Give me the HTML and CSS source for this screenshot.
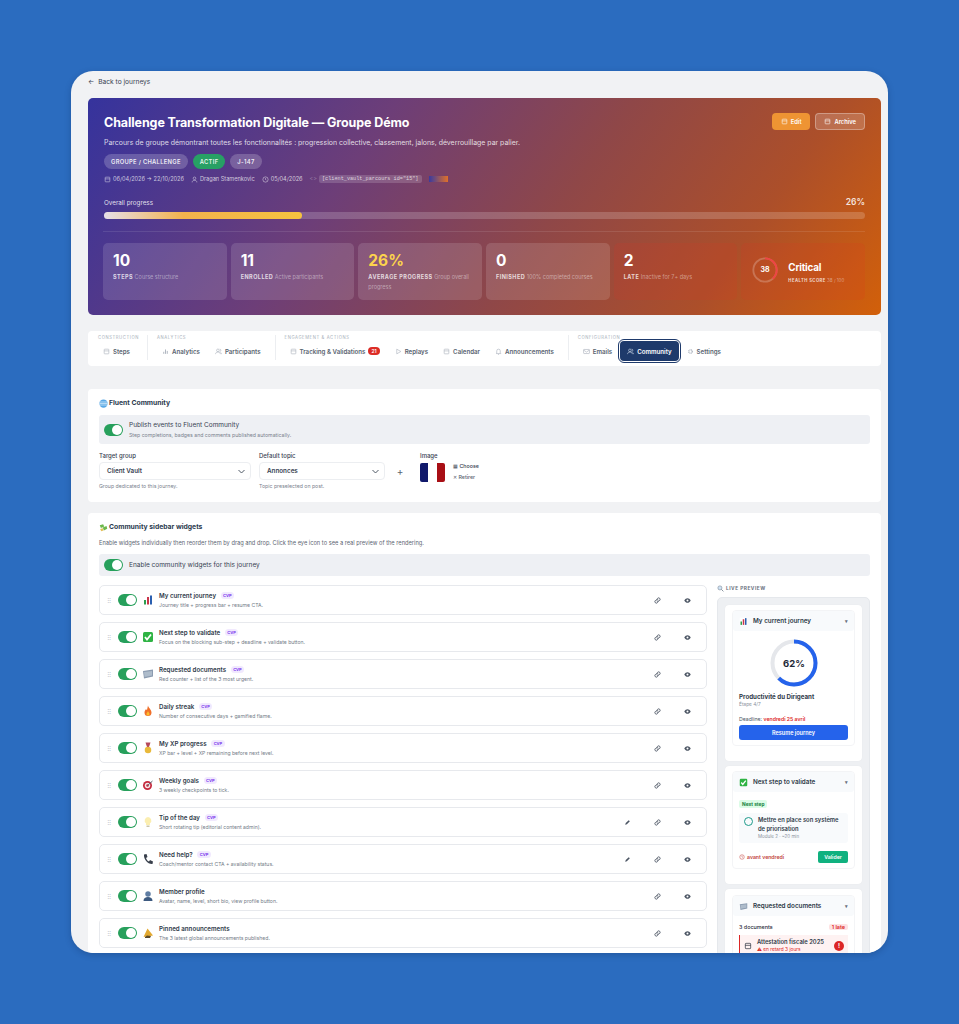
FILE: index.html
```html
<!DOCTYPE html>
<html lang="en">
<head>
<meta charset="utf-8">
<title>Challenge Transformation Digitale</title>
<link rel="stylesheet" href="styles.css">
</head>
<body>
<svg class="defs" width="0" height="0" aria-hidden="true">
  <symbol id="i-link" viewBox="0 0 24 24"><path d="M10 14a5 5 0 0 0 7 0l3-3a5 5 0 0 0-7-7l-1.500 1.500M14 10a5 5 0 0 0-7 0l-3 3a5 5 0 0 0 7 7l1.500-1.500" fill="none" stroke="currentColor" stroke-width="3" stroke-linecap="round"/></symbol>
  <symbol id="i-eye" viewBox="0 0 24 24"><path d="M1 12c3-5 7-8 11-8s8 3 11 8c-3 5-7 8-11 8s-8-3-11-8z" fill="currentColor"/><circle cx="12" cy="12" r="3.500" fill="#fff"/></symbol>
  <symbol id="i-pen" viewBox="0 0 24 24"><path d="M4 20l2-6L16 4l4 4-10 10z" fill="currentColor"/></symbol>
  <symbol id="i-chart" viewBox="0 0 24 24"><rect x="2" y="2" width="20" height="20" fill="#fff"/><rect x="4" y="12" width="4" height="9" fill="#2e9e4f"/><rect x="10" y="6" width="4" height="15" fill="#c9354a"/><rect x="16" y="3" width="4" height="18" fill="#2a5fb0"/></symbol>
  <symbol id="i-check" viewBox="0 0 24 24"><rect x="2" y="2" width="20" height="20" rx="3" fill="#2fb344"/><path d="M6 12l4 5 8-10" fill="none" stroke="#fff" stroke-width="3.500"/></symbol>
  <symbol id="i-doc" viewBox="0 0 24 24"><path d="M2 6l20-3v14L4 21z" fill="#8b9bb0"/><path d="M4 8l16-2v9L5 18z" fill="#aebccb"/></symbol>
  <symbol id="i-fire" viewBox="0 0 24 24"><path d="M12 1c1 5 7 8 7 14a7 7 0 0 1-14 0c0-3 2-5 3-7 1 2 2 2 2 2 1-3 1-6 2-9z" fill="#f0702a"/><path d="M12 12c1 3 3 4 3 6a3 3 0 0 1-6 0c0-2 2-3 3-6z" fill="#fbc02d"/></symbol>
  <symbol id="i-medal" viewBox="0 0 24 24"><path d="M7 1h10l-3 9h-4z" fill="#b5485a"/><circle cx="12" cy="16" r="6.500" fill="#e9b93a"/></symbol>
  <symbol id="i-target" viewBox="0 0 24 24"><circle cx="11" cy="13" r="9" fill="#c5283d"/><circle cx="11" cy="13" r="5.500" fill="#f2e6e6"/><circle cx="11" cy="13" r="2.500" fill="#c5283d"/><path d="M11 13L21 4" stroke="#5a6a7a" stroke-width="2"/></symbol>
  <symbol id="i-bulb" viewBox="0 0 24 24"><path d="M12 2a7 7 0 0 0-4 12.500V18h8v-3.500A7 7 0 0 0 12 2z" fill="#fbeeb0"/><rect x="9" y="19" width="6" height="3" fill="#c9c4a8"/></symbol>
  <symbol id="i-phone" viewBox="0 0 24 24"><path d="M4 3l5-1 2 6-3 2c1 3 3 6 6 7l2-3 6 3-1 5c-9 1-18-9-17-19z" fill="#39404c"/></symbol>
  <symbol id="i-user" viewBox="0 0 24 24"><circle cx="12" cy="8" r="5.500" fill="#5f7da3"/><path d="M3 22c0-6 4-8 9-8s9 2 9 8z" fill="#3d5a80"/></symbol>
  <symbol id="i-person" viewBox="0 0 24 24"><circle cx="12" cy="8" r="4.500" fill="none" stroke="currentColor" stroke-width="2"/><path d="M4 22c0-5 3-7 8-7s8 2 8 7" fill="none" stroke="currentColor" stroke-width="2"/></symbol>
  <symbol id="i-horn" viewBox="0 0 24 24"><path d="M3 20L11 3l11 14z" fill="#e3a92f"/><path d="M6 20l4-3 8 1-2 4H6z" fill="#5c4a2a"/></symbol>
  <symbol id="i-line" viewBox="0 0 24 24"><rect x="4" y="4" width="16" height="16" rx="2" fill="none" stroke="currentColor" stroke-width="2"/><path d="M4 10h16" stroke="currentColor" stroke-width="2"/></symbol>
  <symbol id="i-people" viewBox="0 0 24 24"><circle cx="10" cy="8" r="4.500" fill="none" stroke="currentColor" stroke-width="2"/><path d="M2 21c0-5 3-7 8-7s8 2 8 7M16 4a4 4 0 0 1 0 8M19 15c2 1 3 3 3 6" fill="none" stroke="currentColor" stroke-width="2"/></symbol>
  <symbol id="i-bell" viewBox="0 0 24 24"><path d="M6 17V10a6 6 0 0 1 12 0v7l2 2H4zM10 22h4" fill="none" stroke="currentColor" stroke-width="2"/></symbol>
  <symbol id="i-play" viewBox="0 0 24 24"><path d="M6 4l14 8-14 8z" fill="none" stroke="currentColor" stroke-width="2"/></symbol>
  <symbol id="i-mail" viewBox="0 0 24 24"><rect x="2" y="5" width="20" height="14" rx="2" fill="none" stroke="currentColor" stroke-width="2"/><path d="M2 7l10 7 10-7" fill="none" stroke="currentColor" stroke-width="2"/></symbol>
  <symbol id="i-gear" viewBox="0 0 24 24"><circle cx="12" cy="12" r="6" fill="none" stroke="currentColor" stroke-width="4" stroke-dasharray="3 1.500"/></symbol>
  <symbol id="i-bars" viewBox="0 0 24 24"><path d="M6 20v-7M12 20V5M18 20v-10" fill="none" stroke="currentColor" stroke-width="3"/></symbol>
  <symbol id="i-clock" viewBox="0 0 24 24"><circle cx="12" cy="12" r="9" fill="none" stroke="currentColor" stroke-width="2"/><path d="M12 7v5l3 2" fill="none" stroke="currentColor" stroke-width="2"/></symbol>
</svg>

<main class="window">
  <a class="back"><span>←</span>Back to journeys</a>

  <section class="hero">
    <div class="hero-top">
      <div>
        <h1>Challenge Transformation Digitale — Groupe Démo</h1>
        <p class="hero-desc">Parcours de groupe démontrant toutes les fonctionnalités : progression collective, classement, jalons, déverrouillage par palier.</p>
      </div>
      <div class="hero-actions">
        <button class="btn btn-edit"><svg class="ic7"><use href="#i-line"/></svg>Edit</button>
        <button class="btn btn-archive"><svg class="ic7"><use href="#i-line"/></svg>Archive</button>
      </div>
    </div>
    <div class="pills">
      <span class="pill pill-caps">GROUPE / CHALLENGE</span>
      <span class="pill pill-green">ACTIF</span>
      <span class="pill">J-147</span>
    </div>
    <div class="meta">
      <span class="meta-item"><svg class="ic7"><use href="#i-line"/></svg>06/04/2026 → 22/10/2026</span>
      <span class="meta-item"><svg class="ic7"><use href="#i-person"/></svg>Dragan Stamenkovic</span>
      <span class="meta-item"><svg class="ic7"><use href="#i-clock"/></svg>05/04/2026</span>
      <span class="meta-item meta-code"><span class="meta-arrows">&lt;&gt;</span><code>[client_vault_parcours id="15"]</code></span>
      <span class="swatch"></span>
    </div>
    <div class="progress-head"><span>Overall progress</span><strong>26%</strong></div>
    <div class="progress"><div class="progress-fill" style="width:26%"></div></div>
    <div class="stats">
      <div class="stat"><b>10</b><p><em>STEPS</em> Course structure</p></div>
      <div class="stat"><b>11</b><p><em>ENROLLED</em> Active participants</p></div>
      <div class="stat"><b class="gold">26%</b><p><em>AVERAGE PROGRESS</em> Group overall progress</p></div>
      <div class="stat"><b>0</b><p><em>FINISHED</em> 100% completed courses</p></div>
      <div class="stat stat-red"><b>2</b><p><em>LATE</em> Inactive for 7+ days</p></div>
      <div class="stat stat-red stat-health">
        <svg class="score" viewBox="0 0 30 30"><circle cx="15" cy="15" r="12.500" fill="none" stroke="rgba(255,255,255,.22)" stroke-width="2"/><circle cx="15" cy="15" r="12.500" fill="none" stroke="#ef4444" stroke-width="2" stroke-dasharray="30 79" transform="rotate(-90 15 15)"/><text x="15" y="17.500" text-anchor="middle">38</text></svg>
        <div class="health-text"><strong>Critical</strong><p><em class="tiny">HEALTH SCORE</em> 38 / 100</p></div>
      </div>
    </div>
  </section>

  <nav class="tabs">
    <div class="tab-group tab-group-first">
      <span class="tab-label">CONSTRUCTION</span>
      <div class="tab-row"><a class="tab"><svg class="ic7"><use href="#i-line"/></svg>Steps</a></div>
    </div>
    <div class="tab-group">
      <span class="tab-label">ANALYTICS</span>
      <div class="tab-row"><a class="tab"><svg class="ic7"><use href="#i-bars"/></svg>Analytics</a><a class="tab"><svg class="ic7"><use href="#i-people"/></svg>Participants</a></div>
    </div>
    <div class="tab-group">
      <span class="tab-label">ENGAGEMENT &amp; ACTIONS</span>
      <div class="tab-row"><a class="tab"><svg class="ic7"><use href="#i-line"/></svg>Tracking &amp; Validations <span class="count">21</span></a><a class="tab"><svg class="ic7"><use href="#i-play"/></svg>Replays</a><a class="tab"><svg class="ic7"><use href="#i-line"/></svg>Calendar</a><a class="tab"><svg class="ic7"><use href="#i-bell"/></svg>Announcements</a></div>
    </div>
    <div class="tab-group tab-group-last">
      <span class="tab-label">CONFIGURATION</span>
      <div class="tab-row"><a class="tab"><svg class="ic7"><use href="#i-mail"/></svg>Emails</a><a class="tab tab-active"><svg class="ic7"><use href="#i-people"/></svg>Community</a><a class="tab"><svg class="ic7"><use href="#i-gear"/></svg>Settings</a></div>
    </div>
  </nav>

  <section class="panel panel-fluent">
    <h2><svg class="globe" viewBox="0 0 24 24"><circle cx="12" cy="12" r="11" fill="#5aa9e6"/><path d="M2 8h20M1 12h22M2 16h20" stroke="#d8ecfa" stroke-width="2"/></svg>Fluent Community</h2>
    <div class="band band-tall">
      <span class="toggle"></span>
      <div><div class="band-title">Publish events to Fluent Community</div><div class="band-sub">Step completions, badges and comments published automatically.</div></div>
    </div>
    <div class="form-row">
      <div class="field field-group"><label>Target group</label><div class="select">Client Vault<svg class="chev" viewBox="0 0 12 12"><path d="M2 4l4 4 4-4" fill="none" stroke="currentColor" stroke-width="1.300"/></svg></div><small>Group dedicated to this journey.</small></div>
      <div class="field field-topic"><label>Default topic</label><div class="select">Annonces<svg class="chev" viewBox="0 0 12 12"><path d="M2 4l4 4 4-4" fill="none" stroke="currentColor" stroke-width="1.300"/></svg></div><small>Topic preselected on post.</small></div>
      <span class="plus">+</span>
      <div class="field field-image"><label>Image</label>
        <div class="image-row"><div class="flag"><i></i><i></i><i></i></div><div class="image-actions"><span class="img-choose">▦ Choose</span><span>✕ Retirer</span></div></div>
      </div>
    </div>
  </section>

  <section class="panel panel-widgets">
    <h2><svg class="globe" viewBox="0 0 24 24"><path d="M2 6l9-3 3 6-9 4zM10 12l10-4 2 7-9 5z" fill="#6cb84a"/><path d="M3 16l7-2 2 6-6 2z" fill="#e4c05a"/></svg>Community sidebar widgets</h2>
    <p class="lead">Enable widgets individually then reorder them by drag and drop. Click the eye icon to see a real preview of the rendering.</p>
    <div class="band band-short"><span class="toggle"></span><div class="band-title">Enable community widgets for this journey</div></div>
    <div class="split">
      <div class="rows">
        <div class="row"><span class="grip">⠿</span><span class="toggle"></span><svg class="emoji"><use href="#i-chart"/></svg><div class="row-text"><div class="row-title">My current journey <span class="tag">CVP</span></div><div class="row-sub">Journey title + progress bar + resume CTA.</div></div><svg class="act"><use href="#i-link"/></svg><svg class="act"><use href="#i-eye"/></svg></div>
        <div class="row"><span class="grip">⠿</span><span class="toggle"></span><svg class="emoji"><use href="#i-check"/></svg><div class="row-text"><div class="row-title">Next step to validate <span class="tag">CVP</span></div><div class="row-sub">Focus on the blocking sub-step + deadline + validate button.</div></div><svg class="act"><use href="#i-link"/></svg><svg class="act"><use href="#i-eye"/></svg></div>
        <div class="row"><span class="grip">⠿</span><span class="toggle"></span><svg class="emoji"><use href="#i-doc"/></svg><div class="row-text"><div class="row-title">Requested documents <span class="tag">CVP</span></div><div class="row-sub">Red counter + list of the 3 most urgent.</div></div><svg class="act"><use href="#i-link"/></svg><svg class="act"><use href="#i-eye"/></svg></div>
        <div class="row"><span class="grip">⠿</span><span class="toggle"></span><svg class="emoji"><use href="#i-fire"/></svg><div class="row-text"><div class="row-title">Daily streak <span class="tag">CVP</span></div><div class="row-sub">Number of consecutive days + gamified flame.</div></div><svg class="act"><use href="#i-link"/></svg><svg class="act"><use href="#i-eye"/></svg></div>
        <div class="row"><span class="grip">⠿</span><span class="toggle"></span><svg class="emoji"><use href="#i-medal"/></svg><div class="row-text"><div class="row-title">My XP progress <span class="tag">CVP</span></div><div class="row-sub">XP bar + level + XP remaining before next level.</div></div><svg class="act"><use href="#i-link"/></svg><svg class="act"><use href="#i-eye"/></svg></div>
        <div class="row"><span class="grip">⠿</span><span class="toggle"></span><svg class="emoji"><use href="#i-target"/></svg><div class="row-text"><div class="row-title">Weekly goals <span class="tag">CVP</span></div><div class="row-sub">3 weekly checkpoints to tick.</div></div><svg class="act"><use href="#i-link"/></svg><svg class="act"><use href="#i-eye"/></svg></div>
        <div class="row"><span class="grip">⠿</span><span class="toggle"></span><svg class="emoji"><use href="#i-bulb"/></svg><div class="row-text"><div class="row-title">Tip of the day <span class="tag">CVP</span></div><div class="row-sub">Short rotating tip (editorial content admin).</div></div><svg class="act"><use href="#i-pen"/></svg><svg class="act"><use href="#i-link"/></svg><svg class="act"><use href="#i-eye"/></svg></div>
        <div class="row"><span class="grip">⠿</span><span class="toggle"></span><svg class="emoji"><use href="#i-phone"/></svg><div class="row-text"><div class="row-title">Need help? <span class="tag">CVP</span></div><div class="row-sub">Coach/mentor contact CTA + availability status.</div></div><svg class="act"><use href="#i-pen"/></svg><svg class="act"><use href="#i-link"/></svg><svg class="act"><use href="#i-eye"/></svg></div>
        <div class="row"><span class="grip">⠿</span><span class="toggle"></span><svg class="emoji"><use href="#i-user"/></svg><div class="row-text"><div class="row-title">Member profile</div><div class="row-sub">Avatar, name, level, short bio, view profile button.</div></div><svg class="act"><use href="#i-link"/></svg><svg class="act"><use href="#i-eye"/></svg></div>
        <div class="row"><span class="grip">⠿</span><span class="toggle"></span><svg class="emoji"><use href="#i-horn"/></svg><div class="row-text"><div class="row-title">Pinned announcements</div><div class="row-sub">The 3 latest global announcements published.</div></div><svg class="act"><use href="#i-link"/></svg><svg class="act"><use href="#i-eye"/></svg></div>
      </div>

      <aside class="preview">
        <div class="preview-label"><svg class="ic7" viewBox="0 0 24 24"><circle cx="10" cy="10" r="7" fill="#cfe3f5" stroke="#7a8794" stroke-width="2"/><path d="M15 15l7 7" stroke="#7a8794" stroke-width="3"/></svg>LIVE PREVIEW</div>
        <div class="preview-box">
          <div class="pcard">
            <div class="pwidget">
              <div class="phead"><svg class="pemoji"><use href="#i-chart"/></svg>My current journey<span class="pcaret">▾</span></div>
              <div class="pbody pbody-journey">
                <svg class="donut" viewBox="0 0 48 48"><circle cx="24" cy="24" r="21.500" fill="none" stroke="#e5e7eb" stroke-width="4"/><circle cx="24" cy="24" r="21.500" fill="none" stroke="#2563eb" stroke-width="4" stroke-dasharray="84 135" transform="rotate(-90 24 24)"/><text x="24" y="27.500" text-anchor="middle">62%</text></svg>
                <div class="ptitle">Productivité du Dirigeant</div>
                <div class="pstep">Étape 4/7</div>
                <div class="pdeadline">Deadline: <span>vendredi 25 avril</span></div>
                <button class="pbtn">Resume journey</button>
              </div>
            </div>
          </div>
          <div class="pcard">
            <div class="pwidget">
              <div class="phead"><svg class="pemoji"><use href="#i-check"/></svg>Next step to validate<span class="pcaret">▾</span></div>
              <div class="pbody">
                <span class="nexttag">Next step</span>
                <div class="nextbox"><span class="ring"></span><div><div class="nexttitle">Mettre en place son système de priorisation</div><div class="nextsub">Module 2 · ~20 min</div></div></div>
                <div class="nextfoot"><span class="nextdue"><svg class="ic6"><use href="#i-clock"/></svg>avant vendredi</span><button class="validate">Valider</button></div>
              </div>
            </div>
          </div>
          <div class="pcard">
            <div class="pwidget">
              <div class="phead"><svg class="pemoji"><use href="#i-doc"/></svg>Requested documents<span class="pcaret">▾</span></div>
              <div class="pbody">
                <div class="docs-head"><span>3 documents</span><span class="late">1 late</span></div>
                <div class="docitem"><svg class="ic8"><use href="#i-line"/></svg><div><div class="doctitle">Attestation fiscale 2025</div><div class="docsub">⚠ en retard 3 jours</div></div><span class="bang">!</span></div>
              </div>
            </div>
          </div>
        </div>
      </aside>
    </div>
  </section>
</main>
</body>
</html>
```

FILE: styles.css
```css
* { box-sizing: border-box; }
html, body { margin: 0; height: 1024px; overflow: hidden; }
body {
  background: #2b6cbf;
  font-family: Inter, "Liberation Sans", sans-serif;
  color: #1f2937;
  padding: 71px 71px 0;
}
.defs { display: block; height: 0; }
.window {
  width: 817px;
  height: 882px;
  background: #f1f2f4;
  border-radius: 22px;
  overflow: hidden;
  padding: 6px 7px 0 17px;
  box-shadow: 0 2px 6px rgba(10, 30, 70, .25);
}
.back { display: flex; gap: 4px; height: 21px; font-size: 6.600px; line-height: 10px; color: #374151; }

.ic8 { width: 8px; height: 8px; flex: none; }
.ic7 { width: 7px; height: 7px; flex: none; }
.ic6 { width: 6px; height: 6px; flex: none; }

.hero {
  height: 217px;
  width: 793px;
  border-radius: 5px;
  padding: 16px 16px 0 16px;
  color: #fff;
  background: linear-gradient(125deg, #35339d 0%, #6d3e78 33%, #8f4748 58%, #ac4f2a 80%, #d2600a 100%);
}
.hero-top { display: flex; justify-content: space-between; align-items: flex-start; }
.hero h1 { margin: 0; font-size: 12.500px; line-height: 17px; font-weight: 700; letter-spacing: -.1px; }
.hero-desc { margin: 7px 0 0; font-size: 6.950px; line-height: 10px; color: rgba(255, 255, 255, .82); }
.hero-actions { display: flex; gap: 5px; margin-top: -1px; }
.btn {
  display: flex; align-items: center; gap: 3px;
  height: 17px; padding: 0 8px; border-radius: 4px;
  font: 600 5.800px Inter, sans-serif; color: #fff;
}
.btn-edit { background: #ee9433; border: 0; padding: 0 9px; }
.btn-archive { background: rgba(255, 255, 255, .18); border: 1px solid rgba(255, 255, 255, .3); }

.pills { display: flex; gap: 5px; margin-top: 6px; }
.pill {
  height: 15px; line-height: 15px; padding: 0 7px; border-radius: 8px;
  background: rgba(255, 255, 255, .2);
  font-size: 5.800px; font-weight: 600; letter-spacing: .3px; color: rgba(255, 255, 255, .9);
}
.pill-green { background: #27a065; }
.meta { display: flex; align-items: center; gap: 7px; margin-top: 5px; height: 10px; font-size: 5.600px; color: rgba(255, 255, 255, .72); }
.meta-item { display: flex; align-items: center; gap: 2px; white-space: nowrap; }
.meta-code { gap: 2px; }
.meta-arrows { opacity: .4; }
.meta-code code { font: 5.200px "Liberation Mono", monospace; background: rgba(255, 255, 255, .16); padding: 1px 3px; border-radius: 2px; }
.swatch { width: 19px; height: 6px; background: linear-gradient(90deg, #3a3a9f, #e0702a); }
.progress-head { display: flex; justify-content: space-between; align-items: flex-end; margin-top: 12px; font-size: 6.300px; color: rgba(255, 255, 255, .85); height: 11px; }
.progress-head strong { font-size: 8.500px; font-weight: 600; }
.progress { height: 7px; margin-top: 5px; border-radius: 4px; background: rgba(255, 255, 255, .18); }
.progress-fill { height: 100%; border-radius: 4px; background: linear-gradient(90deg, #e6dfe8 0%, #f3b24d 40%, #f6c33f 100%); }
.stats {
  display: grid; grid-template-columns: repeat(6, 1fr); gap: 4px;
  margin: 12px 0 0 -1px; padding-top: 11px;
  border-top: 1px solid rgba(255, 255, 255, .1);
}
.stat { height: 57px; padding: 9px 10px 0; border-radius: 5px; background: rgba(255, 255, 255, .13); min-width: 0; }
.stat b { display: block; font-size: 15.500px; line-height: 17px; font-weight: 700; }
.stat b.gold { color: #fcd34d; }
.stat p { margin: 3px 0 0; font-size: 5.500px; line-height: 10px; color: rgba(255, 255, 255, .45); }
.stat em { font-style: normal; font-weight: 700; letter-spacing: .45px; color: rgba(255, 255, 255, .78); }
.stat-red { background: rgba(225, 50, 35, .14); }
.stat-health { display: flex; align-items: center; gap: 9px; padding: 0 10px 3px; }
.score { width: 28px; height: 28px; flex: none; }
.score text { font-size: 7.500px; font-weight: 700; fill: #fff; font-family: Inter, sans-serif; }
.health-text { margin-bottom: 1px; }
.stat-health strong { font-size: 9.800px; line-height: 13px; font-weight: 700; letter-spacing: -.2px; }
.stat-health p { margin-top: 2px; line-height: 8px; font-size: 4.500px; }
.tiny { font-size: 4.200px; }

.tabs {
  display: flex; width: 793px; height: 35px; margin-top: 16px;
  background: #fff; border-radius: 4px; padding: 4px 10px 0 8px;
  color: #6b7280;
}
.tab-group { border-right: 1px solid #eceef1; margin-right: 7px; padding-right: 7px; height: 25px; }
.tab-group-first { padding-right: 8px; }
.tab-group-last { border: 0; }
.tab-label { display: block; height: 5px; font-size: 4.200px; line-height: 5px; letter-spacing: .6px; color: #a8afba; margin-bottom: 1px; padding-left: 2px; }
.tab-row { display: flex; gap: 1px; }
.tab { display: flex; align-items: center; gap: 3px; height: 20px; padding: 0 7px; font-size: 6.150px; font-weight: 600; color: #59636f; white-space: nowrap; }
.tab svg { color: #a5adb8; }
.tab-active { background: #1e3a6b; color: #fff; border-radius: 4px; outline: 1px solid #1e3a6b; outline-offset: 1px; }
.tab-active svg { color: #dbe5f3; }
.count { background: #dc2c26; color: #fff; border-radius: 4px; font-size: 5px; height: 8px; line-height: 8px; padding: 0 3px; }

.panel { width: 793px; background: #fff; border-radius: 4px; padding: 9px 11px; }
.panel h2 { display: flex; align-items: center; gap: 1px; margin: 0; font-size: 6.800px; line-height: 10px; font-weight: 700; color: #2b3a4e; }
.globe { width: 9px; height: 9px; flex: none; }
.panel-fluent { height: 113px; margin-top: 23px; }
.band { display: flex; align-items: center; gap: 6px; background: #eef0f4; border-radius: 3px; padding: 0 5px; }
.band-tall { height: 29px; margin-top: 7px; }
.band-short { height: 22px; margin-top: 7px; }
.band-title { font-size: 6.500px; line-height: 9px; color: #374151; }
.band-sub { font-size: 5.200px; line-height: 8px; color: #7a828e; margin-top: 1px; }
.toggle { position: relative; display: block; width: 19px; height: 12px; border-radius: 6px; background: #27a05c; flex: none; }
.toggle::after { content: ""; position: absolute; right: 1px; top: 1px; width: 10px; height: 10px; border-radius: 50%; background: #fff; }
.form-row { display: flex; margin-top: 7px; align-items: flex-start; }
.field label { display: block; font-size: 6px; line-height: 9px; font-weight: 500; color: #374151; }
.field small { display: block; font-size: 5.200px; line-height: 8px; margin-top: 2px; color: #7a828e; }
.field-group { width: 152px; margin-right: 8px; }
.field-topic { width: 126px; }
.select { display: flex; justify-content: space-between; align-items: center; height: 18px; margin-top: 2px; padding: 0 4px 0 7px; border: 1px solid #eceef1; border-radius: 4px; font-size: 6.300px; font-weight: 600; color: #374151; background: #fff; }
.chev { width: 9px; height: 9px; color: #4b5563; }
.plus { width: 30px; text-align: center; font-size: 10px; color: #59636f; margin-top: 14px; }
.field-image { margin-left: 5px; }
.image-row { display: flex; gap: 8px; margin-top: 3px; }
.flag { display: flex; width: 25px; height: 19px; overflow: hidden; border-radius: 2px; }
.flag i { flex: 1; background: #fff; }
.flag i:first-child { background: #10196b; }
.flag i:last-child { background: #a80f15; }
.image-actions { display: flex; flex-direction: column; gap: 4px; font-size: 5.300px; line-height: 7px; font-weight: 500; color: #59636f; }
.img-choose { color: #374151; }

.panel-widgets { margin-top: 11px; height: 440px; }
.lead { margin: 6px 0 0; font-size: 5.700px; line-height: 9px; color: #5d6672; }
.split { display: flex; gap: 10px; margin-top: 8px; }
.rows { display: flex; flex-direction: column; gap: 7px; width: 608px; flex: none; margin-top: 1px; }
.row { display: flex; align-items: center; height: 30px; padding: 0 15px 0 7px; border: 1px solid #e7e9ed; border-radius: 5px; background: #fff; }
.grip { width: 11px; font-size: 6px; color: #b7bdc6; flex: none; }
.row .toggle { margin-right: 5px; }
.emoji { width: 12px; height: 12px; flex: none; margin-right: 5px; }
.row-text { flex: 1; min-width: 0; }
.row-title { font-size: 6.200px; line-height: 9px; font-weight: 600; color: #2f3a49; }
.row-sub { font-size: 5.100px; line-height: 8px; margin-top: 1px; color: #737c88; }
.tag { display: inline-block; margin-left: 3px; padding: 0 2.500px; height: 7px; line-height: 7px; border-radius: 4px; font-size: 4px; font-weight: 700; color: #7c3aed; background: #f1e9fe; vertical-align: 1.500px; }
.act { width: 7px; height: 7px; color: #4b5563; margin-left: 23px; flex: none; }

.preview { width: 153px; flex: none; }
.preview-label { display: flex; align-items: center; gap: 2px; height: 9px; margin-bottom: 4px; font-size: 4.800px; line-height: 9px; font-weight: 700; letter-spacing: .5px; color: #6b7280; }
.preview-box { height: 360px; background: #eef0f3; border: 1px solid #e5e8ec; border-radius: 5px; padding: 7px 7px; display: flex; flex-direction: column; gap: 5px; overflow: hidden; }
.pcard { flex: none; background: #fff; border-radius: 4px; padding: 5px 7px 15px; box-shadow: 0 0 1px rgba(0, 0, 0, .08); }
.pcard:nth-child(1) { height: 156px; }
.pcard:nth-child(2) { height: 118px; }
.pcard:nth-child(3) { padding-top: 6px; }
.phead { display: flex; align-items: center; gap: 5px; height: 20px; padding: 0 6px; font-size: 6.300px; font-weight: 600; color: #2f3a49; background: #f8fafc; border-radius: 3px; }
.pemoji { width: 9px; height: 9px; flex: none; }
.pcaret { margin-left: auto; font-size: 5px; color: #6b7280; }
.pwidget { border: 1px solid #f3f4f6; border-radius: 4px; }
.pbody { padding: 8px 6px 5px; }
.pbody-journey { padding-top: 8px; }
.donut { display: block; width: 48px; height: 48px; margin: 0 auto 5px; }
.donut text { font: 700 9.500px Inter, sans-serif; fill: #1f2937; }
.ptitle { font-size: 6.200px; font-weight: 700; line-height: 9px; color: #2f3a49; }
.pstep { font-size: 4.800px; line-height: 7px; color: #8a929d; }
.pdeadline { font-size: 5.200px; line-height: 8px; margin-top: 7px; color: #4b5563; }
.pdeadline span { color: #dc2626; font-weight: 600; }
.pbtn { display: block; width: 100%; height: 15px; margin-top: 2px; border: 0; border-radius: 3px; background: #2563eb; color: #fff; font: 600 5.500px Inter, sans-serif; }
.nexttag { display: block; width: fit-content; height: 8px; line-height: 8px; padding: 0 3px; background: #dcfce7; color: #15803d; border-radius: 2px; font-size: 4.800px; font-weight: 700; }
.nextbox { display: flex; gap: 5px; margin-top: 5px; padding: 3px 5px; height: 30px; background: #f8fafc; border-radius: 3px; }
.ring { width: 9px; height: 9px; margin-top: 1px; border: 1px solid #1c9a8a; border-radius: 50%; flex: none; }
.nexttitle { font-size: 5.800px; line-height: 8.500px; font-weight: 600; color: #2f3a49; }
.nextsub { font-size: 4.500px; line-height: 8px; color: #8a929d; }
.nextfoot { display: flex; justify-content: space-between; align-items: center; margin-top: 8px; }
.nextdue { display: flex; align-items: center; gap: 2px; font-size: 5.200px; font-weight: 600; color: #c2413c; }
.validate { display: block; height: 12px; width: 30px; padding: 0; border: 0; border-radius: 2px; background: #10b17f; color: #fff; font: 600 5.200px Inter, sans-serif; }
.docs-head { display: flex; justify-content: space-between; align-items: center; font-size: 5.400px; font-weight: 500; }
.late { background: #fee2e2; color: #dc2626; border-radius: 2px; padding: 0 3px; font-weight: 600; }
.docitem { display: flex; align-items: center; gap: 5px; margin-top: 5px; padding: 3px 4px; border-left: 1px solid #dc2626; background: #fef2f2; }
.doctitle { font-size: 5.800px; line-height: 8px; font-weight: 600; color: #2f3a49; white-space: nowrap; }
.docsub { font-size: 4.800px; line-height: 7px; color: #dc2626; }
.bang { width: 10px; height: 10px; margin-left: auto; line-height: 10px; text-align: center; border-radius: 50%; background: #dc2626; color: #fff; font-size: 6px; font-weight: 700; flex: none; }
```
